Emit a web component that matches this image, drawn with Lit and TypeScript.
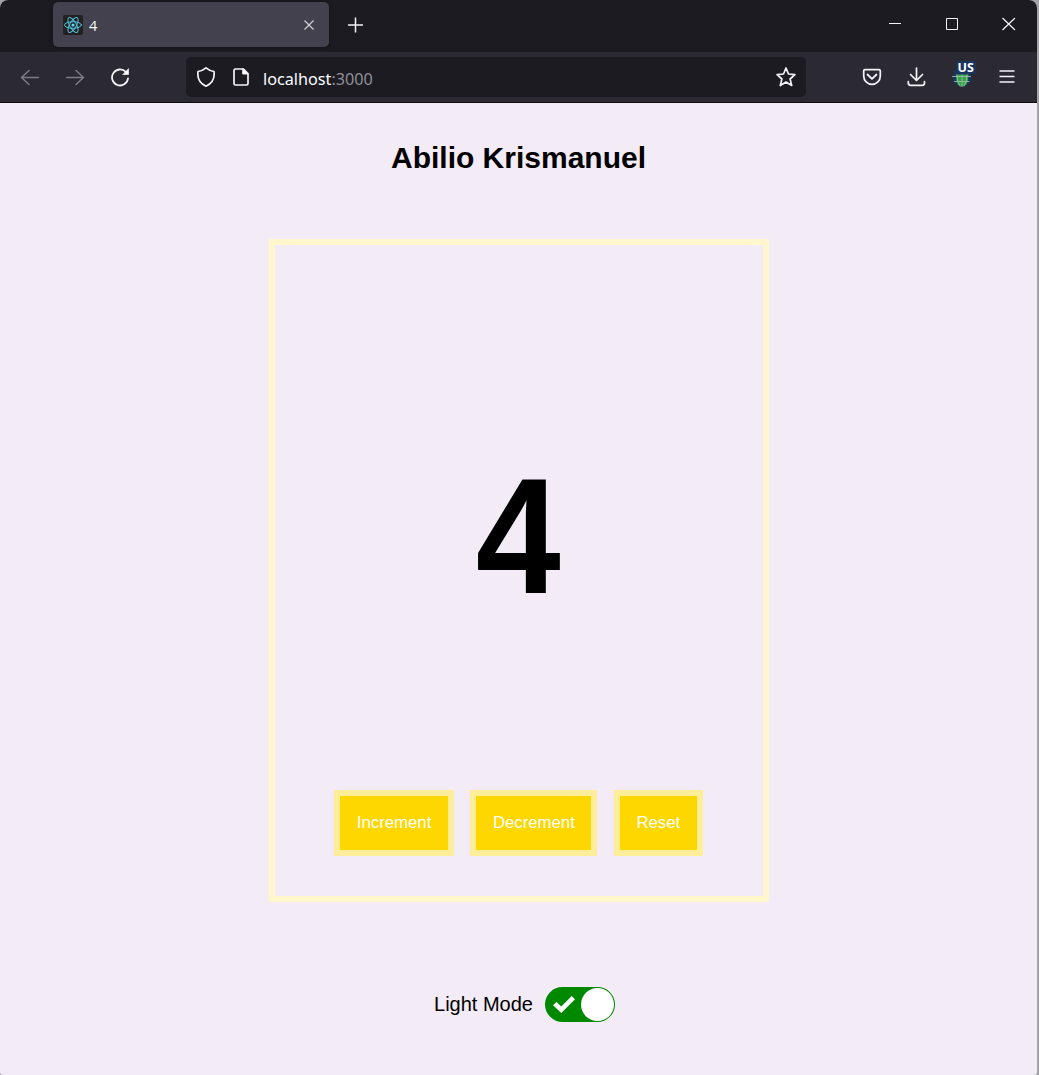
import { LitElement, html, css } from "lit";
import { customElement, state } from "lit/decorators.js";

@customElement("browser-chrome")
class BrowserChrome extends LitElement {
  static properties = { label: { type: String } };
  declare label: string;

  static styles = css`
    :host {
      display: block;
      font-family: "Noto Sans", "Open Sans", sans-serif;
      color: #fbfbfe;
    }
    svg {
      display: block;
      fill: none;
      stroke: #f4f4f8;
      stroke-width: 1.5;
      stroke-linecap: round;
      stroke-linejoin: round;
      flex: none;
    }
    .tabs {
      box-sizing: border-box;
      height: 52px;
      background: #1c1b22;
      display: flex;
      padding: 2px 18px 0 53px;
    }
    .tab {
      box-sizing: border-box;
      width: 276px;
      height: 45px;
      border-radius: 5px;
      background: #42414d;
      box-shadow: 0 0 4px rgba(0, 0, 0, 0.4);
      display: flex;
      align-items: center;
      padding: 0 10px;
    }
    .title {
      flex: 1;
      margin-left: 6px;
      font-family: "Open Sans", sans-serif;
      font-size: 14.5px;
      line-height: 20px;
      padding-top: 2px;
    }
    .logo {
      stroke: #53c1de;
      stroke-width: 1;
    }
    .plus {
      margin: 13px 0 0 16px;
    }
    .controls {
      margin-left: auto;
      display: flex;
      gap: 37px;
      padding-top: 12px;
    }
    .controls svg,
    .thin {
      stroke-width: 1;
      stroke-linecap: butt;
      stroke-linejoin: miter;
    }
    .bar {
      box-sizing: border-box;
      height: 51px;
      background: #2b2a33;
      border-bottom: 1px solid #0c0c0d;
      display: flex;
      align-items: center;
      padding: 0 20px;
    }
    .nav {
      display: flex;
      gap: 25px;
      width: 166px;
    }
    .dim {
      stroke: #7d7c84;
    }
    .url {
      box-sizing: border-box;
      width: 620px;
      height: 40px;
      border-radius: 5px;
      background: #1c1b22;
      display: flex;
      align-items: center;
      padding: 0 10px;
    }
    .address {
      flex: 1;
      margin-left: 12px;
      font-size: 16.2px;
      line-height: 24px;
      padding-top: 3px;
    }
    .port {
      color: #8f8f96;
    }
    .file {
      margin-left: 15px;
    }
    .actions {
      display: flex;
      align-items: center;
      margin-left: 56px;
    }
    .download {
      margin-left: 24px;
    }
    .ext {
      margin: 0 21px 0 25px;
      overflow: visible;
    }
    .badge {
      fill: #fff;
      stroke: none;
      font: bold 12.5px "Open Sans", sans-serif;
    }
  `;

  render() {
    return html`
      <div class="tabs">
        <div class="tab">
          <svg class="logo" width="20" height="20" viewBox="0 0 20 20">
            <rect width="20" height="20" rx="2" fill="#222" stroke="none" />
            <ellipse cx="10" cy="10" rx="8.5" ry="3.3" />
            <ellipse cx="10" cy="10" rx="8.5" ry="3.3" transform="rotate(60 10 10)" />
            <ellipse cx="10" cy="10" rx="8.5" ry="3.3" transform="rotate(120 10 10)" />
            <circle cx="10" cy="10" r="1.6" fill="#61dafb" stroke="none" />
          </svg>
          <span class="title">${this.label}</span>
          <svg class="thin" width="20" height="20"><path d="M5.5 5.5l9 9M14.500 5.500l-9 9" stroke="#cfcfd5" stroke-width="1.2" /></svg>
        </div>
        <svg class="plus thin" width="20" height="20"><path d="M10.500 2.500v15M3 10h15" stroke-width="1.500" /></svg>
        <div class="controls">
          <svg width="20" height="20"><path d="M4 9.500h12" /></svg>
          <svg width="20" height="20"><path d="M4.500 4.500h11v11h-11z" /></svg>
          <svg width="20" height="20"><path d="M3.500 4l12.500 12M16 4L3.500 16" stroke-width="1.200" /></svg>
        </div>
      </div>
      <div class="bar">
        <div class="nav">
          <svg class="dim" width="20" height="20"><path d="M18.500 10.500h-17M9 3.500l-7.500 7 7.500 7" /></svg>
          <svg class="dim" width="20" height="20"><path d="M1.500 10.500h17M11 3.500l7.500 7-7.500 7" /></svg>
          <svg width="20" height="20"><path d="M15.800 4.900A8 8 0 1 0 18 11.500" stroke-width="1.800" /><path d="M18.500 2v5.500H13z" fill="#fff" stroke-width=".7" /></svg>
        </div>
        <div class="url">
          <svg width="20" height="20"><path d="M10 .8Q13.500 3.700 18 4.500Q19.300 15 10 19.200Q.7 15 2 4.500Q6.500 3.700 10 .8z" stroke-width="1.700" /></svg>
          <svg class="file" width="20" height="20"><path d="M4.500 2h8l4.500 4.500V16.500q0 1.500-1.500 1.500h-11Q3 18 3 16.500v-13Q3 2 4.500 2z" stroke-width="1.700" /><path d="M12 2l5 5h-5z" fill="#fff" stroke-width="1" /></svg>
          <span class="address">localhost<span class="port">:3000</span></span>
          <svg width="20" height="20"><path d="M10 1l2.500 6 6.400.6-4.800 4.400 1.600 6.500-5.700-3.500-5.700 3.500 1.600-6.500L1.100 7.600 7.500 7z" stroke-width="1.700" /></svg>
        </div>
        <div class="actions">
          <svg width="20" height="20"><path d="M3 2.700h14q1.300 0 1.300 1.300v5a8.300 8.300 0 0 1-16.600 0v-5Q1.700 2.700 3 2.700z" stroke-width="1.700" /><path d="M5.500 7.500l4.500 4.300 4.500-4.300" stroke-width="1.800" /></svg>
          <svg class="download" width="20" height="20"><path d="M10.500 1v12M4.500 7.500l6 6 6-6" stroke-width="1.700" /><path d="M2.300 14.500V16q0 2.300 2.300 2.300h11.600q2.300 0 2.300-2.300v-1.500" stroke-width="1.700" /></svg>
          <svg class="ext" width="25" height="32" viewBox="0 0 25 32">
            <circle cx="11" cy="16" r="9.500" fill="#19345e" stroke="none" />
            <path d="M5 13.500h12.500q0 12-6.500 12t-6-12z" fill="#30a444" stroke="none" />
            <path d="M1.500 15.500h18M3.500 20.500h14.500M11 14v11.500M6 14q0 7 3 11M16 14q0 7-3 11" stroke="#9cb8ae" stroke-width=".9" />
            <rect x="5.500" y="0" width="19.500" height="13" rx="1.500" fill="#19345e" stroke="none" />
            <text class="badge" x="6.500" y="10.800">US</text>
          </svg>
          <svg class="thin" width="20" height="20"><path d="M2.500 4h15M2.500 9.500h15M2.500 15h15" stroke-width="1.500" /></svg>
        </div>
      </div>
    `;
  }
}

@customElement("app-root")
class AppRoot extends LitElement {
  @state() count = 4;

  static styles = css`
    :host {
      display: block;
      width: 1039px;
      height: 1075px;
      background: #a5a3a8;
      font-family: "Liberation Sans", Arial, sans-serif;
      color: #000;
    }
    .window {
      width: 1037px;
      height: 1075px;
      border-radius: 8px 8px 3px 3px;
      overflow: hidden;
      background: #f3ebf6;
    }
    .page {
      display: flex;
      flex-direction: column;
      align-items: center;
    }
    .name {
      margin: 37px 0 0;
      font-size: 30px;
      line-height: 36px;
      font-weight: bold;
      white-space: nowrap;
    }
    .card {
      box-sizing: border-box;
      width: 500px;
      height: 663px;
      margin: 63px 0 0 1px;
      border: 6px solid #fff6cb;
      display: flex;
      flex-direction: column;
      align-items: center;
      justify-content: space-between;
      padding: 196px 0 40px;
    }
    .count {
      font-size: 166px;
      line-height: 190px;
      font-weight: bold;
      margin-right: 2px;
      transform: scaleX(0.92);
    }
    .buttons {
      display: flex;
      gap: 16.4px;
      margin-right: 1px;
    }
    .button {
      box-sizing: border-box;
      height: 66px;
      padding: 0 16.6px;
      border: 6px solid #ffee99;
      background: #ffd700;
      color: #fff;
      font: 16.75px/20px "Liberation Sans", Arial, sans-serif;
    }
    .mode {
      display: flex;
      align-items: center;
      gap: 12px;
      margin: 85px 0 0 12px;
      font-size: 20px;
      line-height: 35px;
    }
    .switch {
      box-sizing: border-box;
      width: 70px;
      height: 35px;
      border-radius: 18px;
      background: #008800;
      display: flex;
      align-items: center;
      justify-content: space-between;
      padding: 0 1px 0 8px;
    }
    .knob {
      width: 33px;
      height: 33px;
      border-radius: 50%;
      background: #fff;
    }
  `;

  render() {
    return html`
      <div class="window">
        <browser-chrome .label=${String(this.count)}></browser-chrome>
        <div class="page">
          <h1 class="name">Abilio Krismanuel</h1>
          <div class="card">
            <div class="count">${this.count}</div>
            <div class="buttons">
              <button class="button" @click=${() => this.count++}>Increment</button>
              <button class="button" @click=${() => this.count--}>Decrement</button>
              <button class="button" @click=${() => (this.count = 0)}>Reset</button>
            </div>
          </div>
          <div class="mode">
            <span>Light Mode</span>
            <div class="switch">
              <svg width="22" height="17" viewBox="0 0 22 17"><path d="M0 9.200L3.600 6 8.300 10.500 18.700 0 22 3.300 8.300 17z" fill="#fff" /></svg>
              <span class="knob"></span>
            </div>
          </div>
        </div>
      </div>
    `;
  }
}
